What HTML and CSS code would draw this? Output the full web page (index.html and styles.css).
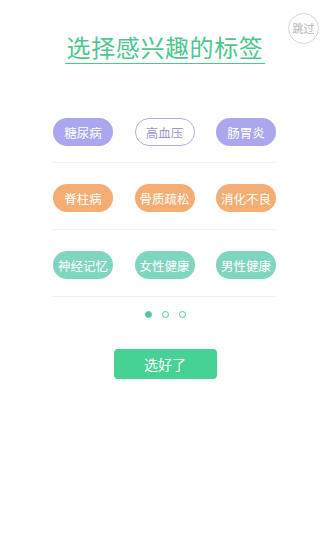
FILE: index.html
```html
<!DOCTYPE html>
<html lang="zh-CN">
<head>
<meta charset="utf-8">
<title>选择感兴趣的标签</title>
<link rel="stylesheet" href="styles.css">
</head>
<body>
<div class="page">
  <button class="skip">跳过</button>
  <div class="title-wrap">
    <h1 class="title">选择感兴趣的标签</h1>
  </div>
  <div class="tags">
    <div class="row">
      <span class="tag purple">糖尿病</span>
      <span class="tag outline">高血压</span>
      <span class="tag purple">肠胃炎</span>
    </div>
    <div class="row">
      <span class="tag orange">脊柱病</span>
      <span class="tag orange">骨质疏松</span>
      <span class="tag orange">消化不良</span>
    </div>
    <div class="row">
      <span class="tag teal">神经记忆</span>
      <span class="tag teal">女性健康</span>
      <span class="tag teal">男性健康</span>
    </div>
  </div>
  <div class="dots">
    <span class="dot active"></span>
    <span class="dot"></span>
    <span class="dot"></span>
  </div>
  <div class="actions">
    <button class="done">选好了</button>
  </div>
</div>
</body>
</html>
```

FILE: styles.css
```css
* { box-sizing: border-box; }
html, body { margin: 0; padding: 0; background: #fff; }
body {
  font-family: "Noto Sans CJK SC", "Noto Sans", sans-serif;
  width: 330px;
  height: 550px;
  overflow: hidden;
}
.page {
  position: relative;
  padding-top: 31px;
}
.skip {
  position: absolute;
  top: 13px;
  left: 288px;
  width: 31px;
  height: 31px;
  border-radius: 50%;
  border: 1px solid #d6d6d6;
  background: #fff;
  color: #b4b4b4;
  font-family: inherit;
  font-size: 11px;
  padding: 0;
  line-height: 1;
}
.title-wrap {
  display: flex;
  justify-content: center;
}
.title {
  margin: 0;
  font-weight: normal;
  font-size: 24px;
  line-height: 31px;
  color: #4ec78f;
  padding: 0 2px 1px;
  border-bottom: 1.5px solid #4ec78f;
  letter-spacing: 0.6px;
}
.tags {
  margin: 32px 0 0 53px;
  width: 223px;
}
.row {
  display: flex;
  justify-content: space-between;
  padding: 21px 0 17px;
  border-bottom: 1px solid #f0f0f0;
}
.row:first-child { padding-top: 22px; padding-bottom: 16px; }
.tag {
  width: 60px;
  height: 28px;
  border-radius: 14px;
  display: flex;
  align-items: center;
  justify-content: center;
  font-size: 12.5px;
  color: #fff;
  white-space: nowrap;
}
.purple { background: #aaa7ee; }
.orange { background: #f4ad72; }
.teal { background: #7fd5c0; }
.outline {
  background: #fff;
  border: 1px solid #b2afe0;
  color: #9b99c9;
}
.dots {
  display: flex;
  justify-content: center;
  gap: 10px;
  margin-top: 14px;
}
.dot {
  width: 7px;
  height: 7px;
  border-radius: 50%;
  border: 1px solid #5acb98;
}
.dot.active { background: #4ecb93; }
.actions {
  display: flex;
  justify-content: center;
  margin-top: 31px;
}
.done {
  width: 103px;
  height: 30px;
  border: none;
  border-radius: 4px;
  background: #46d195;
  color: #fff;
  font-family: inherit;
  font-size: 14px;
  padding: 0;
}
```
